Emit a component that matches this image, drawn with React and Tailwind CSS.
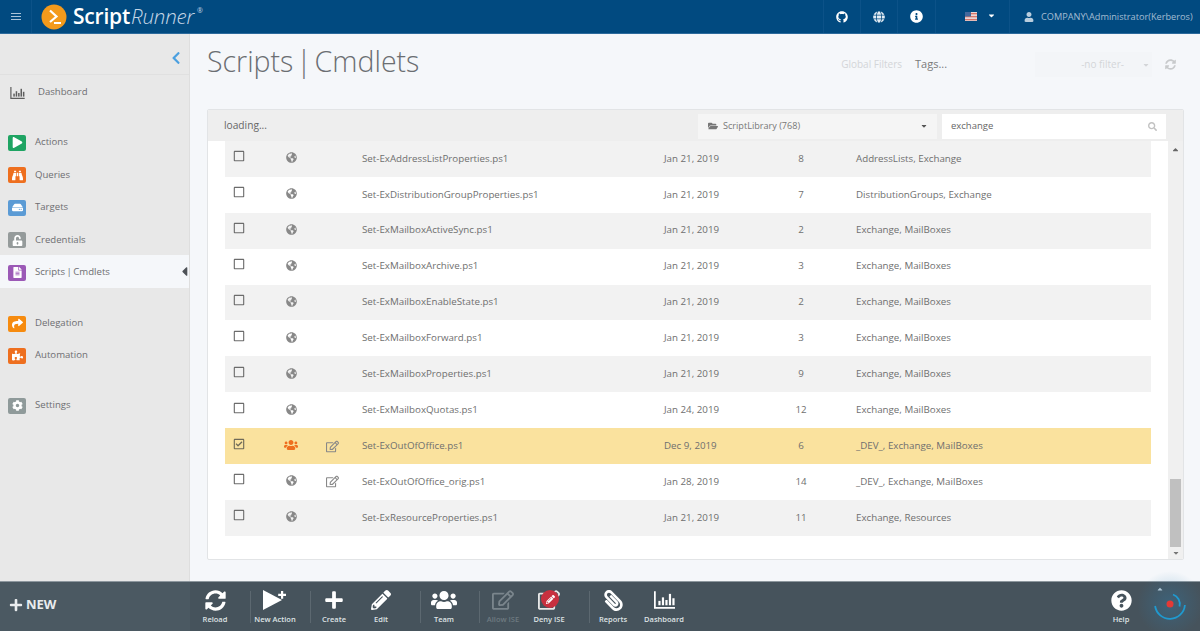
import React from "react";
import { FaGithub, FaGlobe, FaGlobeAmericas, FaInfoCircle, FaUser, FaCaretDown, FaCaretUp, FaCaretLeft, FaChevronLeft, FaSearch, FaFolderOpen, FaSyncAlt, FaPlus, FaPencilAlt, FaUsers, FaRegEdit, FaPaperclip, FaQuestionCircle, FaPlay, FaBinoculars, FaHdd, FaUnlockAlt, FaFileAlt, FaShare, FaPuzzlePiece, FaCog, FaRegSquare, FaRegCheckSquare } from "react-icons/fa";

const font = { fontFamily: '"Open Sans","Noto Sans",sans-serif' };

const Chart = ({ className }) => (
  <svg viewBox="0 0 24 20" className={className} fill="currentColor">
    <path d="M0 0h2v18h22v2H0z" />
    <rect x="5" y="11" width="2.5" height="5" />
    <rect x="9" y="7" width="2.5" height="9" />
    <rect x="13" y="10" width="2.5" height="6" />
    <rect x="17" y="3" width="2.5" height="13" />
    <rect x="21" y="8" width="2.5" height="8" />
  </svg>
);

const Logo = () => (
  <div className="flex items-center ml-[9px]">
    <svg viewBox="0 0 26 26" className="w-[26px] h-[26px]">
      <circle cx="13" cy="13" r="12.5" fill="#f39a1c" />
      <path d="M9 6.5l6.500 6-6.500 5.500M13 19h7" fill="none" stroke="#fff" strokeWidth="2.2" />
    </svg>
    <span className="ml-[6px] text-[21px] font-semibold text-white leading-none tracking-[-0.2px]">Script</span>
    <span className="ml-[1px] text-[20.5px] font-light italic text-[#c5d6e6] leading-none tracking-[-0.2px]">Runner</span>
    <span className="ml-[3px] text-[7px] text-[#c5d6e6] self-start mt-[2px]">®</span>
  </div>
);

const Header = () => (
  <header className="h-[34px] shrink-0 bg-[#014a80] border-b border-[#2c6a9c] flex items-center text-white">
    <div className="w-[32px] h-full flex items-center justify-center border-r border-[#0c5288]">
      <div className="w-[10px] flex flex-col gap-[2px]">
        <span className="h-[1px] bg-[#a9c3d9]" />
        <span className="h-[1px] bg-[#a9c3d9]" />
        <span className="h-[1px] bg-[#a9c3d9]" />
      </div>
    </div>
    <Logo />
    <div className="ml-auto flex h-full items-center">
      <div className="w-[37px] h-full flex items-center justify-center border-l border-[#0c5288]"><FaGithub className="text-[12px]" /></div>
      <div className="w-[37px] h-full flex items-center justify-center border-l border-[#0c5288]"><FaGlobe className="text-[12px] text-[#e4edf5]" /></div>
      <div className="w-[38px] h-full flex items-center justify-center border-l border-[#0c5288]"><FaInfoCircle className="text-[13px]" /></div>
      <div className="w-[74px] h-full flex items-center border-l border-[#0c5288] pl-[29px]">
        <svg viewBox="0 0 12 9" className="w-[12px] h-[9px]">
          <rect width="12" height="9" fill="#e9d6d6" />
          <rect y="1" width="12" height="1.3" fill="#d9776a" />
          <rect y="4" width="12" height="1.3" fill="#d9776a" />
          <rect y="7" width="12" height="1.3" fill="#d9776a" />
          <rect width="6" height="4.5" fill="#43689c" />
        </svg>
        <FaCaretDown className="text-[9px] ml-[10px] mt-[-3px]" />
      </div>
      <div className="w-[191px] h-full flex items-center border-l border-[#0c5288] pl-[14px] text-[9.2px] text-[#a4bdd3] whitespace-nowrap">
        <FaUser className="text-[10px] mr-[7px] text-[#b9cddd]" />
        COMPANY\Administrator(Kerberos)
      </div>
    </div>
  </header>
);

const NavItem = ({ Icon, color, label, active, className = "" }) => (
  <div className={`relative flex items-center pl-[8px] pt-[2px] text-[9.6px] text-[#6e6e72] ${active ? "bg-[#f5f7fa]" : ""} ${className}`}>
    <div className={`w-[18px] h-[16px] rounded-[2px] flex items-center justify-center ${color} text-white`}>
      <Icon className="text-[11px]" />
    </div>
    <span className="ml-[9px] [word-spacing:-1px]">{label}</span>
    {active && <FaCaretLeft className="absolute right-[-3px] top-[9px] text-[#4e5257] text-[15px]" />}
  </div>
);

const Sidebar = () => (
  <aside className="w-[190px] shrink-0 bg-[#e8e8e8] border-r border-[#dedede] flex flex-col">
    <div className="h-[41px] shrink-0 border-b border-[#e0e0e0] flex items-center justify-end pr-[6px] pt-[7px]">
      <FaChevronLeft className="text-[#4ba0e0] text-[14px]" />
    </div>
    <div className="h-[33px] flex items-center pl-[10px] pt-[2px] text-[9.6px] text-[#6e6e72]">
      <Chart className="w-[15px] h-[12px] text-[#5e5e5e]" />
      <span className="ml-[13px]">Dashboard</span>
    </div>
    <NavItem Icon={FaPlay} color="bg-[#1fa463]" label="Actions" className="h-[33px] mt-[17px]" />
    <NavItem Icon={FaBinoculars} color="bg-[#ee6f1f]" label="Queries" className="h-[32px]" />
    <NavItem Icon={FaHdd} color="bg-[#5b9bd5]" label="Targets" className="h-[33px]" />
    <NavItem Icon={FaUnlockAlt} color="bg-[#959b9b]" label="Credentials" className="h-[32px]" />
    <NavItem Icon={FaFileAlt} color="bg-[#9b59b6]" label="Scripts | Cmdlets" className="h-[33px]" active />
    <NavItem Icon={FaShare} color="bg-[#f68b0f]" label="Delegation" className="h-[33px] mt-[18px]" />
    <NavItem Icon={FaPuzzlePiece} color="bg-[#ee6f1f]" label="Automation" className="h-[31px]" />
    <NavItem Icon={FaCog} color="bg-[#8f9a9a]" label="Settings" className="h-[33px] mt-[18px]" />
  </aside>
);

const rows = [
  ["Set-ExAddressListProperties.ps1", "Jan 21, 2019", "8", "AddressLists, Exchange"],
  ["Set-ExDistributionGroupProperties.ps1", "Jan 21, 2019", "7", "DistributionGroups, Exchange"],
  ["Set-ExMailboxActiveSync.ps1", "Jan 21, 2019", "2", "Exchange, MailBoxes"],
  ["Set-ExMailboxArchive.ps1", "Jan 21, 2019", "3", "Exchange, MailBoxes"],
  ["Set-ExMailboxEnableState.ps1", "Jan 21, 2019", "2", "Exchange, MailBoxes"],
  ["Set-ExMailboxForward.ps1", "Jan 21, 2019", "3", "Exchange, MailBoxes"],
  ["Set-ExMailboxProperties.ps1", "Jan 21, 2019", "9", "Exchange, MailBoxes"],
  ["Set-ExMailboxQuotas.ps1", "Jan 24, 2019", "12", "Exchange, MailBoxes"],
  ["Set-ExOutOfOffice.ps1", "Dec 9, 2019", "6", "_DEV_, Exchange, MailBoxes", "sel"],
  ["Set-ExOutOfOffice_orig.ps1", "Jan 28, 2019", "14", "_DEV_, Exchange, MailBoxes", "edit"],
  ["Set-ExResourceProperties.ps1", "Jan 21, 2019", "11", "Exchange, Resources"],
];

const Row = ({ r, i }) => {
  const sel = r[4] === "sel";
  const bg = sel ? "bg-[#fae29e]" : i % 2 === 0 ? "bg-[#f2f2f2]" : "bg-white";
  return (
    <div className={`h-[35.9px] flex items-center text-[9.75px] text-[#6f6f6f] ${bg}`}>
      <div className="w-[28px] flex justify-center mt-[-5px]">
        {sel ? <FaRegCheckSquare className="text-[12px] text-[#6f6a58]" /> : <FaRegSquare className="text-[12px] text-[#6c6c6c]" />}
      </div>
      <div className="w-[42px] ml-[17px] flex justify-center mt-[-2px]">
        {sel ? <FaUsers className="text-[14px] text-[#ee6f1f]" /> : <FaGlobeAmericas className="text-[11px] text-[#888]" />}
      </div>
      <div className="w-[40px] flex justify-center">
        {r[4] && <FaRegEdit className="text-[13px] text-[#888]" />}
      </div>
      <div className="w-[301px] ml-[10px]">{r[0]}</div>
      <div className="w-[108px] pl-[1px]">{r[1]}</div>
      <div className="w-[60px] text-center">{r[2]}</div>
      <div className="ml-[25px]">{r[3]}</div>
    </div>
  );
};

const Main = () => (
  <main className="flex-1 min-w-0 bg-[#f5f7fa] flex flex-col pl-[17px] pr-[16px]">
    <div className="h-[75px] shrink-0 flex items-start">
      <h1 className="text-[28.5px] font-light text-[#6b6e72] leading-none mt-[13px] [word-spacing:-4.5px]">Scripts | Cmdlets</h1>
      <div className="ml-auto mt-[18px] mr-[8px] flex items-center h-[25px] text-[10px]">
        <span className="text-[#d3d5d8] mr-[13px]">Global Filters</span>
        <span className="text-[#7a7a7a] text-[11px] w-[120px]">Tags...</span>
        <div className="w-[117px] h-[25px] bg-[#f3f5f8] flex items-center justify-end pr-[2px] text-[#d3d5d8]">
          <span>-no filter-</span>
          <FaCaretDown className="text-[8px] ml-[18px]" />
        </div>
        <FaSyncAlt className="text-[11px] text-[#c8cacc] ml-[13px]" />
      </div>
    </div>
    <section className="h-[451px] shrink-0 bg-white border border-[#e2e4e6] rounded-[2px] flex flex-col overflow-hidden">
      <div className="h-[31px] shrink-0 bg-[#eeeeee] flex items-center pl-[16px] pr-[17px] text-[10px]">
        <span className="text-[#666] text-[10.2px]">loading...</span>
        <div className="ml-auto mt-[1px] w-[239px] h-[25px] bg-[#f5f5f5] flex items-center pl-[10px] pr-[9px] text-[#777] text-[9.1px]">
          <FaFolderOpen className="text-[10px] text-[#777] mr-[5px]" />
          ScriptLibrary (768)
          <FaCaretDown className="ml-auto text-[8px] text-[#555]" />
        </div>
        <div className="ml-[5px] mt-[1px] w-[224px] h-[25px] bg-white flex items-center pl-[9px] pr-[9px] text-[#666] text-[9.5px]">
          exchange
          <FaSearch className="ml-auto text-[9px] text-[#c2c2c2]" />
        </div>
      </div>
      <div className="flex-1 flex min-h-0">
        <div className="w-[17px] shrink-0" />
        <div className="w-[926px] shrink-0">
          {rows.map((r, i) => <Row key={r[0]} r={r} i={i} />)}
        </div>
        <div className="w-[17px] shrink-0" />
        <div className="w-[15px] shrink-0 bg-[#f0f0f0] flex flex-col items-center">
          <FaCaretUp className="text-[9px] text-[#666] mt-[4px]" />
          <div className="w-[11px] h-[68px] bg-[#c0c0c0] mt-auto" />
          <FaCaretDown className="text-[8px] text-[#777] my-[2px]" />
        </div>
      </div>
    </section>
  </main>
);

const Tool = ({ w, label, children, dim }) => (
  <div className={`shrink-0 flex flex-col items-center ${dim ? "text-[#7a858c]" : "text-white"}`} style={{ width: w }}>
    <div className="h-[24px] flex items-center justify-center">{children}</div>
    <span className={`mt-[1px] text-[7.5px] font-semibold leading-[12px] whitespace-nowrap ${dim ? "text-[#6e7a81]" : "text-[#dfe3e5]"}`}>{label}</span>
  </div>
);
const Sep = ({ l = 0 }) => <div className="w-0 h-[32px] shrink-0 border-l border-[#5c6870]" style={{ marginLeft: l, marginRight: -1 }} />;

const Footer = () => (
  <footer className="h-[50px] shrink-0 bg-[#46535c] border-t border-[#8d979e] flex items-center text-white">
    <div className="w-[190px] shrink-0 h-full flex items-center pl-[9px] pb-[3px] bg-[#4b5962] font-bold text-[13px] text-[#e9ecee]">
      <FaPlus className="text-[14px] mr-[3px]" />NEW
    </div>
    <Tool w={50} label="Reload"><FaSyncAlt className="text-[21px]" /></Tool>
    <Sep l={10} />
    <Tool w={50} label="New Action">
      <svg viewBox="0 0 26 22" className="w-[26px] h-[22px]" fill="currentColor">
        <path d="M1 1l19 10L1 21z" /><path d="M19 2h2.200v2.800H24V7h-2.800v2.800H19V7h-2.800V4.800H19z" />
      </svg>
    </Tool>
    <Sep l={10} />
    <Tool w={48} label="Create"><FaPlus className="text-[20px]" /></Tool>
    <Tool w={46} label="Edit"><FaPencilAlt className="text-[20px]" /></Tool>
    <Sep l={16} />
    <Tool w={48} label="Team"><FaUsers className="text-[26px]" /></Tool>
    <Sep l={11} />
    <Tool w={48} label="Allow ISE" dim><FaRegEdit className="text-[22px]" /></Tool>
    <Tool w={44} label="Deny ISE">
      <div className="relative w-[24px] h-[22px] flex items-center justify-center">
        <FaRegEdit className="text-[22px] text-[#e8e8e8]" />
        <div className="absolute left-[4px] top-[1px] w-[18px] h-[18px] rounded-full bg-[#c8303f] flex items-center justify-center">
          <FaPencilAlt className="text-[9px]" />
        </div>
      </div>
    </Tool>
    <Sep l={18} />
    <Tool w={48} label="Reports"><FaPaperclip className="text-[21px] -scale-x-100" /></Tool>
    <Tool w={54} label="Dashboard"><Chart className="w-[21px] h-[18px]" /></Tool>
    <div className="ml-auto flex items-center">
      <Tool w={40} label="Help"><FaQuestionCircle className="text-[21px]" /></Tool>
      <div className="relative w-[59px] h-[50px]">
        <FaCaretUp className="absolute left-[15px] top-[3px] text-[8px] text-[#c9d6de]" />
        <svg viewBox="0 0 70 70" className="absolute left-[-6px] top-[-13px] w-[70px] h-[70px] overflow-visible" fill="none">
          <defs>
            <radialGradient id="glow">
              <stop offset="0%" stopColor="#2d7fb0" stopOpacity="0.35" />
              <stop offset="100%" stopColor="#2d7fb0" stopOpacity="0" />
            </radialGradient>
          </defs>
          <circle cx="35" cy="35" r="33" fill="url(#glow)" />
          <path d="M20.100 37a15 15 0 0 0 29.800-1" stroke="#1f9ad0" strokeWidth="1.800" />
          <path d="M38 25.500a10 10 0 0 1 6.500 12" stroke="#1f9ad0" strokeWidth="1.800" />
          <circle cx="35" cy="35" r="3.500" fill="#e53935" />
        </svg>
      </div>
    </div>
  </footer>
);

export default function App() {
  return (
    <div className="w-[1200px] h-[631px] flex flex-col overflow-hidden bg-[#f5f7fa]" style={font}>
      <Header />
      <div className="flex-1 flex min-h-0">
        <Sidebar />
        <Main />
      </div>
      <Footer />
    </div>
  );
}
